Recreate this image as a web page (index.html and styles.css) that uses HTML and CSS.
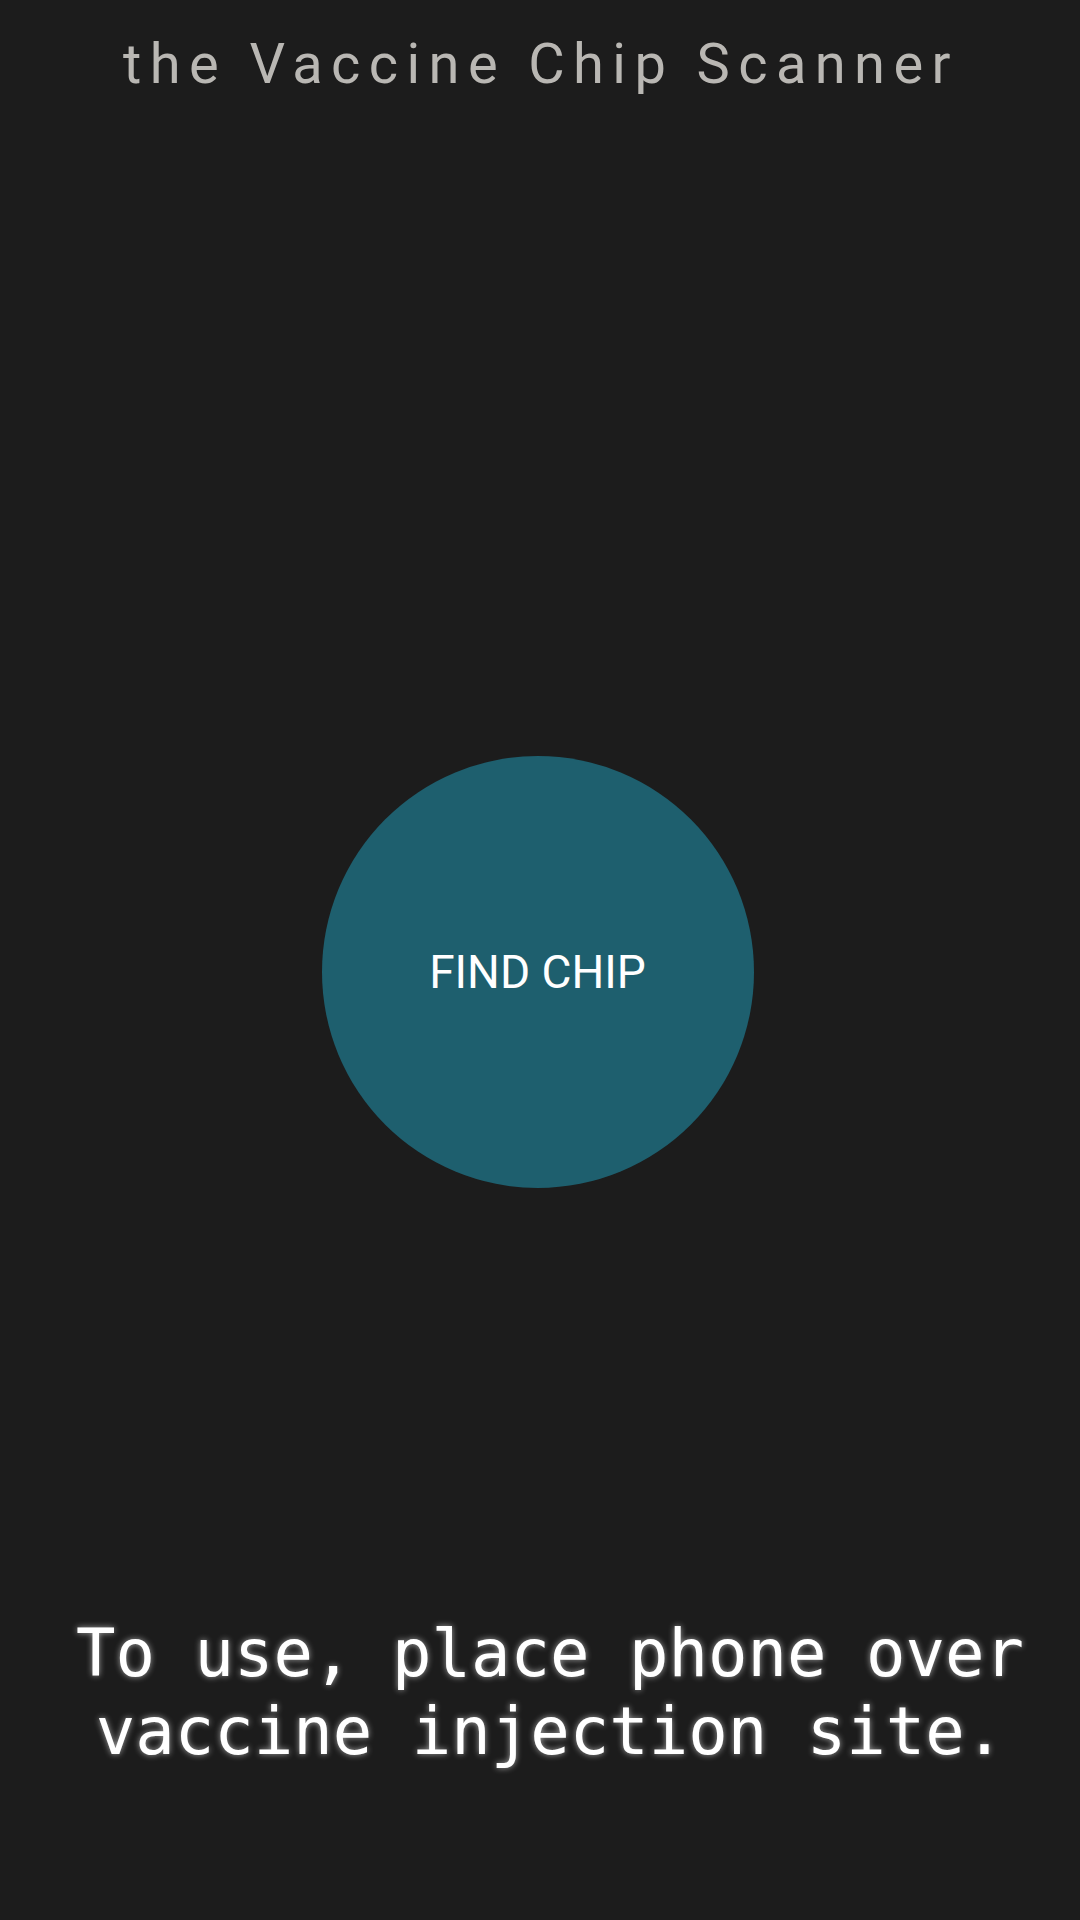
FILE: index.html
```html
<!DOCTYPE html>
<html>
<head>
<meta charset="utf-8">
<link rel="stylesheet" href="styles.css">
</head>
<body>
<div class="screen">
  <h1 class="title">the Vaccine Chip Scanner</h1>
  <button class="find-btn">FIND CHIP</button>
  <p class="hint">To use, place phone over vaccine injection site.</p>
</div>
</body>
</html>
```

FILE: styles.css
```css
html, body {
  margin: 0;
  padding: 0;
  background: #1c1c1c;
}
.screen {
  width: 1080px;
  height: 1920px;
  display: flex;
  flex-direction: column;
  align-items: center;
  overflow: hidden;
}
.title {
  margin: 0;
  padding-top: 31px;
  padding-left: 2px;
  font-family: Roboto, "Liberation Sans", sans-serif;
  font-weight: 400;
  font-size: 56px;
  line-height: 66px;
  letter-spacing: 8.4px;
  color: #b9b7b3;
  text-align: center;
  white-space: nowrap;
}
.find-btn {
  margin-top: 659px;
  margin-right: 5px;
  width: 432px;
  height: 432px;
  border-radius: 50%;
  border: none;
  background: #1e5f6e;
  color: #ffffff;
  font-family: Roboto, "Liberation Sans", sans-serif;
  font-size: 46px;
  font-weight: 400;
  padding: 0;
  display: flex;
  align-items: center;
  justify-content: center;
}
.hint {
  margin: 426px 0 0 0;
  width: 1080px;
  box-sizing: border-box;
  padding-left: 20px;
  font-family: "DejaVu Sans Mono", "Liberation Mono", monospace;
  font-size: 65.6px;
  line-height: 78px;
  color: #ffffff;
  text-align: center;
  text-shadow: 0 0 6px rgba(255, 255, 255, 0.6);
}
```
